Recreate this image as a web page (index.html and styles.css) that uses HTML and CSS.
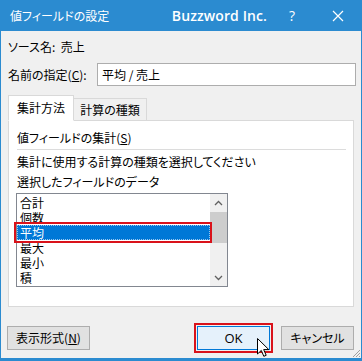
FILE: index.html
```html
<!DOCTYPE html>
<html lang="ja">
<head>
<meta charset="utf-8">
<title>値フィールドの設定</title>
<link rel="stylesheet" href="styles.css">
</head>
<body>
<div class="window">
  <div class="titlebar">
    <span class="title">値フィールドの設定</span>
    <span class="company">Buzzword Inc.</span>
    <span class="tbtn help">?</span>
    <span class="tbtn close"><svg width="12" height="12" viewBox="0 0 12 12"><path d="M1 1L11 11M11 1L1 11" stroke="#fff" stroke-width="1.2"/></svg></span>
  </div>
  <div class="content">
    <div class="row source">ソース名:&nbsp;&nbsp;売上</div>
    <div class="row name">
      <span class="label">名前の指定(<u>C</u>):</span>
      <div class="input">平均 / 売上</div>
    </div>
    <div class="tabs">
      <div class="tab active">集計方法</div>
      <div class="tab">計算の種類</div>
    </div>
    <div class="panel">
      <div class="group">値フィールドの集計(<u>S</u>)</div>
      <div class="sep"></div>
      <div class="desc">集計に使用する計算の種類を選択してください</div>
      <div class="desc">選択したフィールドのデータ</div>
      <div class="listbox">
        <div class="items">
          <div class="item">合計</div>
          <div class="item">個数</div>
          <div class="item selected"><span class="focus">平均</span></div>
          <div class="item">最大</div>
          <div class="item">最小</div>
          <div class="item">積</div>
        </div>
        <div class="scrollbar">
          <div class="arrow"><svg width="9" height="6" viewBox="0 0 9 6"><path d="M1 5L4.5 1.5L8 5" fill="none" stroke="#606060" stroke-width="1.3"/></svg></div>
          <div class="track"><div class="thumb"></div></div>
          <div class="arrow"><svg width="9" height="6" viewBox="0 0 9 6"><path d="M1 1L4.5 4.5L8 1" fill="none" stroke="#606060" stroke-width="1.3"/></svg></div>
        </div>
        <div class="redbox sel-box"></div>
      </div>
    </div>
    <div class="buttons">
      <div class="btn format">表示形式(<u>N</u>)</div>
      <div class="spacer"></div>
      <div class="btn ok">OK<div class="redbox ok-box"></div></div>
      <div class="btn cancel">キャンセル</div>
    </div>
  </div>
  <svg class="cursor" width="13" height="20" viewBox="0 0 13 20"><path d="M0.5 0.5L0.5 16L4.3 12.4L6.8 18.3L9.2 17.3L6.7 11.6L11.8 11.6Z" fill="#fff" stroke="#000" stroke-width="1" stroke-linejoin="round"/></svg>
  <svg class="grip" width="10" height="10" viewBox="0 0 10 10"><path d="M9 2L2 9M9 5L5 9M9 8L8 9" stroke="#a0a0a0" stroke-width="1"/></svg>
</div>
</body>
</html>
```
FILE: styles.css
```css
*, *::before, *::after {
  box-sizing: border-box;
}
html, body {
  margin: 0;
  padding: 0;
  background: #f0f0f0;
}
body {
  font-family: "Noto Sans CJK JP", "Noto Sans", sans-serif;
  font-size: 12px;
  line-height: 16px;
  font-feature-settings: "palt";
  color: #000;
}
.window {
  position: relative;
  width: 362px;
  height: 361px;
  border-left: 1px solid #2b8bd0;
  border-right: 1px solid #2b8bd0;
  border-bottom: 3px solid #2b8bd0;
  background: #f0f0f0;
  overflow: hidden;
}
.titlebar {
  height: 31px;
  background: #2b8bd0;
  color: #fff;
  display: flex;
  align-items: center;
}
.title {
  padding-left: 9px;
}
.company {
  margin-left: auto;
  font-family: "Open Sans", "Liberation Sans", sans-serif;
  font-weight: 600;
  font-size: 14px;
  letter-spacing: 0.1px;
}
.tbtn {
  width: 46px;
  height: 31px;
  display: flex;
  align-items: center;
  justify-content: center;
}
.help {
  margin-left: 2px;
  font-family: "Open Sans", sans-serif;
  font-size: 14px;
}
.content {
  padding: 0 7px 0 7px;
  display: flex;
  flex-direction: column;
}
.row {
  display: flex;
  align-items: center;
}
.source {
  height: 16px;
  margin-top: 8px;
}
.name {
  margin-top: 8px;
  height: 23px;
}
.label {
  width: 89px;
  white-space: nowrap;
}
.input {
  flex: 1;
  height: 23px;
  margin-right: -2px;
  border: 1px solid #adadad;
  background: #fff;
  display: flex;
  align-items: center;
  padding-left: 4px;
}
.tabs {
  margin-top: 9px;
  display: flex;
  align-items: flex-end;
  height: 26px;
  position: relative;
  z-index: 1;
  margin-bottom: -1px;
}
.tab {
  border: 1px solid #d9d9d9;
  background: #f0f0f0;
  display: flex;
  align-items: center;
  justify-content: center;
  white-space: nowrap;
}
.tab.active {
  width: 66px;
  height: 26px;
  background: #fff;
  border-bottom: 1px solid #fff;
}
.tab:not(.active) {
  width: 74px;
  height: 22px;
  margin-left: -1px;
  margin-bottom: 1px;
  border-bottom: none;
}
.panel {
  height: 187px;
  border: 1px solid #d9d9d9;
  background: #fff;
  padding: 9px 7px 0 8px;
  display: flex;
  flex-direction: column;
}
.group {
  height: 16px;
}
.sep {
  margin-top: 3px;
  margin-right: 0;
  height: 1px;
  background: #dcdcdc;
}
.desc {
  height: 20px;
  line-height: 20px;
}
.sep + .desc {
  margin-top: 2px;
}
.listbox {
  position: relative;
  margin-top: 1px;
  margin-left: -1px;
  width: 212px;
  height: 94px;
  border: 1px solid #828790;
  display: flex;
  background: #fff;
}
.items {
  flex: 1;
  padding-top: 1px;
}
.item {
  height: 15px;
  line-height: 15px;
  padding-left: 3px;
}
.item.selected {
  background: #0078d7;
  color: #fff;
  padding-left: 0;
}
.focus {
  display: block;
  height: 15px;
  line-height: 13px;
  border: 1px dotted #9ac6ee;
  padding-left: 2px;
}
.scrollbar {
  width: 17px;
  background: #f0f0f0;
  display: flex;
  flex-direction: column;
}
.arrow {
  height: 17px;
  display: flex;
  align-items: center;
  justify-content: center;
}
.track {
  flex: 1;
  padding-top: 1px;
}
.thumb {
  height: 31px;
  background: #cdcdcd;
}
.redbox {
  position: absolute;
  border: 2px solid #d9121a;
  pointer-events: none;
}
.sel-box {
  left: -3px;
  top: 28px;
  width: 198px;
  height: 21px;
}
.buttons {
  margin-top: 19px;
  display: flex;
  height: 24px;
}
.btn {
  position: relative;
  height: 24px;
  border: 1px solid #adadad;
  background: #e1e1e1;
  display: flex;
  align-items: center;
  justify-content: center;
  width: 73px;
  white-space: nowrap;
}
.format {
  margin-left: -1px;
  width: 83px;
}
.spacer {
  flex: 1;
}
.ok {
  border-color: #0078d7;
  background: #e5f1fb;
  font-family: "Open Sans", "Noto Sans", sans-serif;
  font-size: 13px;
  margin-right: 11px;
}
.ok-box {
  left: -4px;
  top: -4px;
  width: 79px;
  height: 30px;
}
.cursor {
  position: absolute;
  left: 256px;
  top: 338px;
}
.grip {
  position: absolute;
  right: 0;
  bottom: 0;
}
```
